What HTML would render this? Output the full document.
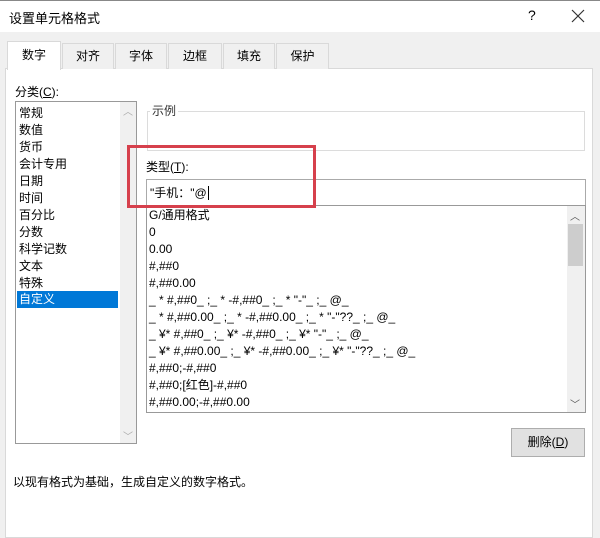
<!DOCTYPE html>
<html><head><meta charset="utf-8"><style>
*{margin:0;padding:0;box-sizing:border-box}
body{width:600px;height:533px;background:#f0f0f0;position:relative;overflow:hidden;font-family:"Liberation Sans","Noto Sans CJK SC",sans-serif;font-size:12px;color:#000}
.a{position:absolute}
.tab{position:absolute;top:43px;height:26px;border:1px solid #d9d9d9;border-bottom:none;background:#f0f0f0;text-align:center;line-height:25px;font-size:12px}
.li{position:absolute;left:19px;height:17px;line-height:17px}
.fi{position:absolute;left:149px;height:17px;line-height:17px;white-space:pre}
</style></head><body>
<div class="a" style="left:0;top:0;width:600px;height:32px;background:#fff;border-top:1px solid #888"></div>
<div class="a" style="left:9px;top:8px;font-size:13px">设置单元格格式</div>
<div class="a" style="left:528px;top:7px;font-size:14px">?</div>
<svg class="a" style="left:571px;top:9px" width="14" height="14"><path d="M1 1L13 13M13 1L1 13" stroke="#333" stroke-width="1.2"/></svg>
<div class="a" style="left:5px;top:68px;width:588px;height:470px;background:#fff;border:1px solid #d9d9d9"></div>
<div class="tab" style="left:7px;top:41px;width:54px;height:29px;background:#fff;line-height:27px">数字</div>
<div class="tab" style="left:62px;width:52px">对齐</div>
<div class="tab" style="left:115px;width:52px">字体</div>
<div class="tab" style="left:168px;width:54px">边框</div>
<div class="tab" style="left:223px;width:52px">填充</div>
<div class="tab" style="left:276px;width:53px">保护</div>
<div class="a" style="left:15px;top:83px">分类(<u>C</u>):</div>
<div class="a" style="left:15px;top:101px;width:122px;height:343px;border:1px solid #999;background:#fff"></div>
<div class="a" style="left:120px;top:102px;width:16px;height:341px;background:#f0f0f0"></div>
<div class="a" style="left:123px;top:103px;color:#aaa;font-size:10px">︿</div>
<div class="a" style="left:123px;top:428px;color:#aaa;font-size:10px">﹀</div>
<div class="a" style="left:17px;top:291px;width:101px;height:17px;background:#0078d7"></div>
<div class="li" style="top:105px">常规</div>
<div class="li" style="top:122px">数值</div>
<div class="li" style="top:139px">货币</div>
<div class="li" style="top:156px">会计专用</div>
<div class="li" style="top:173px">日期</div>
<div class="li" style="top:190px">时间</div>
<div class="li" style="top:207px">百分比</div>
<div class="li" style="top:224px">分数</div>
<div class="li" style="top:241px">科学记数</div>
<div class="li" style="top:258px">文本</div>
<div class="li" style="top:275px">特殊</div>
<div class="li" style="top:291px;color:#fff">自定义</div>
<div class="a" style="left:147px;top:111px;width:438px;height:40px;border:1px solid #dcdcdc"></div>
<div class="a" style="left:150px;top:102px;background:#fff;padding:0 2px;color:#333">示例</div>
<div class="a" style="left:146px;top:158px">类型(<u>T</u>):</div>
<div class="a" style="left:146px;top:179px;width:440px;height:27px;border:1px solid #aaa;background:#fff"></div>
<div class="a" style="left:150px;top:184px">"手机："@<span style="border-left:1px solid #000;margin-left:1px"></span></div>
<div class="a" style="left:146px;top:205px;width:440px;height:208px;border:1px solid #999;background:#fff"></div>
<div class="a" style="left:567px;top:206px;width:18px;height:206px;background:#f0f0f0"></div>
<div class="a" style="left:568px;top:224px;width:15px;height:42px;background:#cdcdcd"></div>
<div class="a" style="left:570px;top:208px;color:#555;font-size:10px">︿</div>
<div class="a" style="left:570px;top:396px;color:#555;font-size:10px">﹀</div>
<div class="fi" style="top:207px">G/通用格式</div>
<div class="fi" style="top:224px">0</div>
<div class="fi" style="top:241px">0.00</div>
<div class="fi" style="top:258px">#,##0</div>
<div class="fi" style="top:275px">#,##0.00</div>
<div class="fi" style="top:292px">_ * #,##0_ ;_ * -#,##0_ ;_ * "-"_ ;_ @_</div>
<div class="fi" style="top:309px">_ * #,##0.00_ ;_ * -#,##0.00_ ;_ * "-"??_ ;_ @_</div>
<div class="fi" style="top:326px">_ ¥* #,##0_ ;_ ¥* -#,##0_ ;_ ¥* "-"_ ;_ @_</div>
<div class="fi" style="top:343px">_ ¥* #,##0.00_ ;_ ¥* -#,##0.00_ ;_ ¥* "-"??_ ;_ @_</div>
<div class="fi" style="top:360px">#,##0;-#,##0</div>
<div class="fi" style="top:377px">#,##0;[红色]-#,##0</div>
<div class="fi" style="top:394px">#,##0.00;-#,##0.00</div>
<div class="a" style="left:127px;top:145px;width:189px;height:63px;border:3px solid #d6404c"></div>
<div class="a" style="left:511px;top:428px;width:74px;height:29px;border:1px solid #adadad;background:#e1e1e1;text-align:center;line-height:27px">删除(<u>D</u>)</div>
<div class="a" style="left:13px;top:473px">以现有格式为基础，生成自定义的数字格式。</div>
</body></html>
